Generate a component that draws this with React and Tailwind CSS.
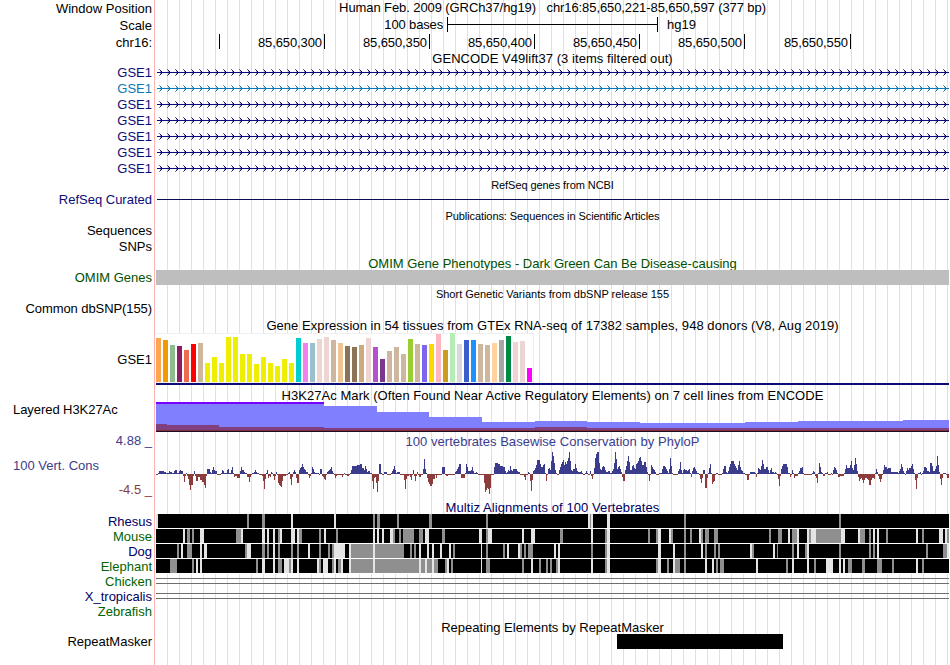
import clsx from 'clsx'

const TRACK_WIDTH = 793

const TICKS = [
  { gap: 'w-[64px]', label: '' },
  { gap: 'w-[105px]', label: '85,650,300' },
  { gap: 'w-[105px]', label: '85,650,350' },
  { gap: 'w-[105px]', label: '85,650,400' },
  { gap: 'w-[105px]', label: '85,650,450' },
  { gap: 'w-[105px]', label: '85,650,500' },
  { gap: 'w-[106px]', label: '85,650,550' },
]

const GENES = ['#0c0c78', '#0c78b4', '#0c0c78', '#0c0c78', '#0c0c78', '#0c0c78', '#0c0c78']

const TISSUES = [
  [44, '#ffa54f'], [42, '#ee9a00'], [37, '#8fbc8f'], [36, '#8b1c62'], [32, '#ee6a50'], [38, '#ff0000'],
  [39, '#cdb79e'], [19, '#eeee00'], [25, '#eeee00'], [19, '#eeee00'], [45, '#eeee00'], [45, '#eeee00'],
  [28, '#eeee00'], [28, '#eeee00'], [18, '#eeee00'], [25, '#eeee00'], [19, '#eeee00'], [16, '#eeee00'],
  [23, '#eeee00'], [19, '#eeee00'], [44, '#00cdcd'], [39, '#ee82ee'], [39, '#9ac0cd'], [43, '#eed5d2'],
  [45, '#eed5d2'], [42, '#cdb79e'], [39, '#eec591'], [36, '#8b7355'], [35, '#8b7355'], [37, '#cdaa7d'],
  [44, '#eed5d2'], [35, '#b452cd'], [23, '#7a378b'], [31, '#cdb79e'], [35, '#cdb79e'], [28, '#cdb79e'],
  [43, '#9acd32'], [38, '#cdb79e'], [37, '#7a67ee'], [38, '#ffd700'], [48, '#ffb6c1'], [32, '#cd9b1d'],
  [49, '#b4eeb4'], [38, '#d9d9d9'], [42, '#3a5fcd'], [42, '#1e90ff'], [38, '#cdb79e'], [37, '#cdb79e'],
  [39, '#ffd39b'], [42, '#a6a6a6'], [46, '#008b45'], [40, '#eed5d2'], [41, '#eed5d2'], [14, '#ff00ff'],
]

// each run is "start:value" and lasts until the next start
const parseRuns = (text) => {
  const runs = text.trim().split(/\s+/).map(r => r.split(':').map(Number))
  return runs.map(([x, v], i) => ({ x, v, w: (runs[i + 1]?.[0] ?? TRACK_WIDTH) - x }))
}

const PHYLOP = parseRuns(`
  0:-1 2:1 3:3 8:2 10:1 13:3 14:2 16:1 18:3 19:4 21:1 23:3 24:4 25:3 27:-2 28:-8 29:-2 30:1 31:-2 32:-5
  33:-11 34:-16 35:-11 37:-2 38:3 39:-2 40:-7 42:-3 44:-6 46:-8 48:-11 49:-14 50:-2 51:5 54:2 55:1 56:4
  57:7 58:4 59:3 61:-1 65:1 66:4 67:3 68:1 71:4 72:5 73:1 75:4 76:7 77:1 78:-3 79:-2 81:-4 84:3 85:7 86:4
  88:2 89:1 91:-3 93:-8 94:-3 95:-1 96:1 98:2 99:4 100:2 101:1 103:-1 106:-2 107:-7 108:-15 109:-5 110:1
  111:4 112:-4 113:-2 114:-3 115:2 116:1 117:-2 118:-6 119:-2 120:2 121:-1 122:-9 123:-11 124:-12 125:-13
  126:-7 127:-2 130:-1 132:1 133:2 134:-5 135:-11 136:-3 137:2 138:4 139:2 140:-4 141:-9 143:4 144:6 145:7
  146:10 147:7 148:5 149:4 150:2 152:-1 153:-4 154:-2 155:1 156:7 157:5 158:2 159:1 163:-1 164:5 166:-2
  167:-3 168:-5 169:-6 170:-1 171:2 172:3 173:4 174:5 175:7 176:3 177:1 178:-1 179:-4 180:-2 181:-1 186:-3
  187:-1 188:1 189:-1 191:-2 193:-1 194:1 195:4 196:8 201:9 204:10 206:6 208:4 209:8 210:5 211:2 212:3
  214:1 216:-7 217:-15 218:-4 219:-3 220:-9 221:-18 222:-7 223:10 225:1 226:-1 228:2 231:-1 235:1 236:3
  237:5 238:8 239:4 240:1 241:2 244:-1 248:-6 249:-15 250:-5 251:-2 253:-1 254:-3 255:-6 256:-1 257:4
  258:-2 259:-7 260:-2 261:2 262:-1 263:-3 265:-1 267:5 268:15 269:5 270:1 271:-4 272:-8 273:-10 274:-12
  276:-10 277:-5 279:-1 280:-4 281:-1 286:7 289:-1 290:-2 292:-1 299:2 300:3 301:5 302:7 303:10 305:-4
  309:1 310:10 311:7 312:3 315:4 316:7 317:3 318:1 320:2 321:1 322:-1 328:-9 329:-18 330:-16 331:-14
  332:-15 333:-20 334:-14 335:-1 338:7 339:11 342:10 344:8 347:7 349:3 350:1 351:2 352:4 353:3 354:8 355:4
  356:3 357:5 361:3 362:2 364:-1 368:-3 369:-6 370:-1 372:2 373:1 374:-7 375:-17 376:-6 377:3 378:4 379:6
  380:9 381:14 384:10 385:7 387:9 388:10 389:1 390:-7 391:-1 392:5 393:6 394:4 395:13 396:22 397:18 398:11
  399:4 400:1 401:-1 403:4 404:7 405:10 406:12 407:14 408:9 409:12 410:10 411:13 412:16 413:22 414:13
  415:4 416:3 417:5 419:10 420:6 421:3 422:2 425:3 426:1 427:-1 429:1 430:3 431:1 432:-1 434:3 435:-2
  436:-5 437:-1 438:6 439:16 440:20 441:22 443:11 444:5 445:4 446:7 447:8 448:7 449:4 450:2 452:3 454:1
  456:3 457:5 458:11 459:22 460:15 461:5 462:7 463:8 464:5 465:2 466:-3 467:-7 469:4 470:8 471:13 472:18
  473:12 474:4 476:8 477:9 478:6 479:5 480:10 481:11 482:13 483:16 484:17 485:13 486:9 488:12 490:7 491:2
  492:-1 493:-7 494:-1 495:9 496:7 497:5 498:4 499:2 500:-1 503:1 506:5 507:8 509:7 510:5 511:3 512:1
  513:5 514:16 515:8 516:1 517:-1 522:3 523:5 524:12 525:4 526:1 527:4 528:5 529:4 531:3 532:4 533:5 534:1
  535:-3 536:3 537:6 538:7 539:5 540:3 541:1 543:-1 544:-5 545:-9 546:-4 547:4 549:-14 551:-4 552:1 553:6
  554:10 555:1 556:-10 557:-8 558:-7 559:-1 560:1 562:-1 566:1 567:5 568:8 570:2 571:1 572:3 573:7 574:10
  575:13 578:10 579:8 580:6 581:4 582:9 583:13 584:7 585:4 586:3 587:1 589:-1 591:-6 593:-1 594:2 599:1
  600:-3 601:1 602:6 603:5 604:4 605:8 606:14 607:10 608:5 610:7 612:4 613:1 614:4 615:6 616:2 618:1 619:2
  620:1 621:-1 622:-5 623:-12 624:-2 625:5 626:8 627:10 631:7 632:1 634:-3 635:-1 636:4 637:1 638:-4
  639:-2 642:1 643:3 644:6 646:7 647:1 648:-1 656:1 657:3 658:2 659:-2 660:-4 661:-9 662:1 663:11 664:7
  665:2 666:1 667:-2 669:1 671:2 672:-1 675:1 676:-1 677:4 678:7 679:6 680:4 681:1 682:-3 684:-2 688:1
  689:5 690:9 691:6 694:9 695:13 696:6 697:4 698:9 699:16 700:10 701:3 702:-3 703:-7 704:-5 705:-4 706:-6
  707:-9 708:-6 709:-4 711:-5 712:-6 713:-11 715:-6 716:-4 718:-5 719:1 720:5 721:2 722:-2 723:-5 724:-8
  725:-5 726:-1 727:4 728:9 729:7 731:5 732:6 735:2 742:1 743:3 744:5 745:10 746:7 747:3 748:1 749:-1
  750:3 751:6 752:4 753:6 755:8 756:10 757:5 758:1 759:-6 760:-15 761:-4 762:1 764:2 765:-1 766:1 767:3
  768:7 770:6 771:3 773:2 774:11 776:8 777:3 779:5 780:8 781:18 782:9 783:2 784:-5 785:-11 786:-4 787:1
  790:-1 791:-4
`)

const H3K27AC = parseRuns('0:28 168:26 221:20 273:15 326:10 379:11 431:10 484:9 589:10 642:11 747:12')
const H3K27AC_LOW = parseRuns('0:8 11:7 63:5 168:4 379:5 431:4')

// L = weakly aligned, G = partly aligned, both as "x,width"
const SPECIES = [
  {
    name: 'Rhesus',
    color: 'text-[#000064]',
    marks: 'L0,2 G91,2 G106,3 L135,2 L178,2 G217,2 G221,3 G241,2 G273,3 G330,2 L432,2 G434,1 L435,2 L451,3 G528,2 G683,2',
  },
  {
    name: 'Mouse',
    color: 'text-[#006400]',
    marks: `L27,2 G31,3 G36,2 L44,4 G80,5 L85,2 L106,3 L111,2 L117,2 G122,2 L124,2 L135,4 L141,2 G143,3 G163,2
      L168,2 G180,2 L217,2 L221,2 L226,2 L234,3 G237,2 G243,2 G247,11 G263,4 L269,4 G286,3 L323,3 G330,2 L332,4
      L366,2 L375,4 G404,3 L435,2 G449,2 L451,3 G492,2 G500,2 L502,3 L513,2 G515,2 G528,2 G534,2 L543,2 G545,2
      G549,4 G558,4 G613,2 G622,4 L632,2 G636,5 L641,2 L651,2 G653,2 L655,5 G660,25 L685,4 L702,2 G704,5 G713,2
      L717,2 L721,2 G730,2 L760,2 G766,2 L783,4 L789,2 G791,2`,
  },
  {
    name: 'Dog',
    color: 'text-[#000064]',
    marks: `G21,2 L25,2 G31,5 L44,2 L48,3 G89,2 L91,4 G106,3 G111,2 L117,2 G122,2 G135,2 G141,2 L152,2 G163,2
      G172,2 G176,2 L178,11 L193,2 G195,22 L217,2 G219,29 G254,2 G258,2 L263,2 L271,2 L276,2 L284,2 L293,2
      G297,2 L325,1 G330,2 G347,2 L351,2 L362,2 G364,2 G368,2 G372,5 L398,2 L402,2 G435,2 G449,2 L451,3 L502,3
      L517,2 G528,2 L545,2 G549,2 G558,2 G562,2 L594,2 G596,2 L617,2 G621,1 G636,2 L641,2 G649,2 L651,2 G683,2
      G713,2 G717,2 L721,2 G770,2 G787,4 L791,2`,
  },
  {
    name: 'Elephant',
    color: 'text-[#006400]',
    marks: `G14,7 G36,2 L40,2 L44,2 G100,2 L106,3 L117,2 G122,4 L128,5 G133,2 L135,2 L141,2 L161,2 G163,2 L167,5
      G176,2 L178,2 G182,3 L185,2 L193,2 G195,22 L217,2 G219,44 L263,2 G265,4 L269,2 G271,5 L276,2 G278,4
      G289,2 L291,2 G295,2 L325,1 G330,4 G366,2 L375,2 G383,2 G390,2 G394,2 G400,2 L402,2 L435,2 G449,2 L451,3
      G500,2 L502,3 G511,2 L517,2 G519,5 G528,2 L549,2 L556,2 G560,2 G564,4 L600,2 G630,2 L636,2 L651,2 G658,2
      L670,7 L683,2 L687,2 G692,4 G706,3 G721,5 G736,2 L760,2 G766,2`,
  },
]

const parseMarks = (text) =>
  text.trim().split(/\s+/).map(m => {
    const [x, w] = m.slice(1).split(',').map(Number)
    return { x, w, fill: m[0] === 'L' ? '#e4e4e4' : '#8f8f8f' }
  })

function Row({ label, labelClass, className, children }) {
  return (
    <div className={clsx('flex', className)}>
      <div className={clsx('w-[156px] shrink-0 pr-[4px] text-right', labelClass)}>{label}</div>
      <div className="w-[793px] shrink-0">{children}</div>
    </div>
  )
}

function Title({ className, children }) {
  return <div className={clsx('ml-[156px] text-center', className)}>{children}</div>
}

function GeneArrows({ color }) {
  const starts = Array.from({ length: 99 }, (_, i) => 3 + i * 8)
  return (
    <svg width={TRACK_WIDTH} height="16" className="block" shapeRendering="crispEdges" fill={color}>
      <rect x="1" y="8" width="792" height="1" />
      {starts.map(x => (
        <g key={x}>
          <rect x={x} y="5" width="1" height="1" opacity="0.6" />
          <rect x={x + 1} y="6" width="1" height="1" />
          <rect x={x + 2} y="7" width="1" height="1" />
          <rect x={x + 1} y="7" width="1" height="1" opacity="0.4" />
          <rect x={x + 2} y="9" width="1" height="1" />
          <rect x={x + 1} y="9" width="1" height="1" opacity="0.4" />
          <rect x={x + 1} y="10" width="1" height="1" />
          <rect x={x} y="11" width="1" height="1" opacity="0.6" />
        </g>
      ))}
    </svg>
  )
}

function Expression() {
  return (
    <>
      <div className="flex h-[50px] w-[378px] items-end gap-[2px] border-y border-r border-[#f0f0f0] bg-white">
        {TISSUES.map(([height, color], i) => (
          <div key={i} className="w-[5px] shrink-0" style={{ height, backgroundColor: color }} />
        ))}
      </div>
      <div className="h-[2px] bg-[#0c0c78]" />
    </>
  )
}

function Histone() {
  return (
    <svg width={TRACK_WIDTH} height="30" className="block" shapeRendering="crispEdges">
      {H3K27AC.map(r => <rect key={r.x} x={r.x} y={30 - r.v} width={r.w} height={r.v} fill="#8080ff" />)}
      <rect x="0" y="0" width="168" height="2" fill="#7a00ff" />
      {H3K27AC_LOW.map(r => <rect key={r.x} x={r.x} y={30 - r.v} width={r.w} height={r.v} fill="#804080" />)}
      <rect x="0" y="28" width={TRACK_WIDTH} height="1" fill="#80303f" />
      <rect x="0" y="29" width={TRACK_WIDTH} height="1" fill="#200c20" />
    </svg>
  )
}

function Conservation() {
  return (
    <svg width={TRACK_WIDTH} height="50" className="block" shapeRendering="crispEdges">
      {PHYLOP.map(r => (
        <rect
          key={r.x}
          x={r.x}
          y={r.v > 0 ? 25 - r.v : 25}
          width={r.w}
          height={Math.abs(r.v)}
          fill={r.v > 0 ? '#3c3c8c' : '#8c3c3c'}
        />
      ))}
    </svg>
  )
}

function Alignment({ marks }) {
  return (
    <svg width={TRACK_WIDTH} height="15" className="block" shapeRendering="crispEdges">
      <rect width={TRACK_WIDTH} height="15" fill="#fff" />
      <rect width={TRACK_WIDTH} height="14" fill="#000" />
      {parseMarks(marks).map(m => <rect key={m.x} x={m.x} width={m.w} height="14" fill={m.fill} />)}
    </svg>
  )
}

function Unaligned() {
  return <div className="pt-[4px]"><div className="h-[6px] border-y border-[#6e6e6e]" /></div>
}

export default function App() {
  return (
    <div className="h-[665px] w-[950px] overflow-hidden bg-white">
      <div className="h-full w-[949px] bg-[linear-gradient(90deg,#fff_154px,#ffb4b4_154px,#ffb4b4_155px,#fff_155px,#fff_156px,transparent_156px),repeating-linear-gradient(90deg,transparent_0px,transparent_11px,#dcdcff_11px,#dcdcff_12px)] font-['Liberation_Sans',Arial,sans-serif] text-[13px] whitespace-pre text-black">
        <Row label="Window Position" className="h-[17px] leading-[17px]">
          <div className="text-center leading-[15px] tracking-[-0.09px]">Human Feb. 2009 (GRCh37/hg19)   chr16:85,650,221-85,650,597 (377 bp)</div>
        </Row>
        <Row label="Scale" className="h-[17px] leading-[17px]">
          <div className="flex h-[15px] items-center leading-[15px]">
            <span className="w-[288px] pr-[1px] text-right tracking-[-0.15px]">100 bases</span>
            <span className="ml-[3px] flex h-[15px] w-[211px] items-center border-x border-black">
              <span className="h-px w-full bg-black" />
            </span>
            <span className="ml-[9px]">hg19</span>
          </div>
        </Row>
        <Row label="chr16:" className="h-[17px] leading-[17px]">
          <div className="flex h-[15px]">
            {TICKS.map(t => (
              <span
                key={t.label}
                className={clsx('border-r border-black pr-[2px] text-right leading-[17px] tracking-[-0.1px]', t.gap)}
              >
                {t.label}
              </span>
            ))}
          </div>
        </Row>
        <Title className="h-[13px] leading-[15px] tracking-[0.05px]">GENCODE V49lift37 (3 items filtered out)</Title>

        {GENES.map((color, i) => (
          <Row
            key={i}
            label="GSE1"
            className="h-[16px] leading-[17px]"
            labelClass={i === 1 ? 'text-[#0c78b4]' : 'text-[#0c0c78]'}
          >
            <GeneArrows color={color} />
          </Row>
        ))}

        <Title className="h-[15px] text-[11px] leading-[19px] tracking-[-0.07px]">RefSeq genes from NCBI</Title>
        <Row label="RefSeq Curated" className="h-[16px] leading-[17px]" labelClass="text-[#0c0c78]">
          <div className="pt-[8px] pl-px"><div className="h-px bg-[#0c0c50]" /></div>
        </Row>

        <Title className="h-[15px] text-[11px] leading-[19px] tracking-[-0.08px]">Publications: Sequences in Scientific Articles</Title>
        <Row label="Sequences" className="h-[16px] leading-[17px]" />
        <Row label="SNPs" className="h-[16px] leading-[17px]" />

        <Title className="h-[16px] leading-[19px] text-[#005000]">OMIM Gene Phenotypes - Dark Green Can Be Disease-causing</Title>
        <Row label="OMIM Genes" className="h-[16px] leading-[16px]" labelClass="text-[#005000]">
          <div className="h-[15px] bg-[#bebebe]" />
        </Row>

        <Title className="h-[14px] text-[11px] leading-[17px]">Short Genetic Variants from dbSNP release 155</Title>
        <Row label="Common dbSNP(155)" className="h-[16px] leading-[17px]" labelClass="tracking-[-0.08px]" />

        <Title className="h-[17px] leading-[19px] tracking-[0.055px]">Gene Expression in 54 tissues from GTEx RNA-seq of 17382 samples, 948 donors (V8, Aug 2019)</Title>
        <Row label="GSE1" className="h-[53px] leading-[54px]">
          <Expression />
        </Row>

        <Title className="h-[16px] leading-[19px] tracking-[0.05px]">H3K27Ac Mark (Often Found Near Active Regulatory Elements) on 7 cell lines from ENCODE</Title>
        <Row
          label={<div className="pl-[13px] text-left tracking-[-0.06px]">Layered H3K27Ac</div>}
          className="h-[30px] leading-[16px]"
        >
          <Histone />
        </Row>

        <Row
          className="h-[67px]"
          label={
            <div className="flex h-[67px] flex-col justify-between leading-[18px] text-[#3c3c8c]">
              <div>4.88 _</div>
              <div className="pl-[13px] text-left">100 Vert. Cons</div>
              <div className="text-[#8c3c3c]">-4.5 _</div>
            </div>
          }
        >
          <div className="h-[17px] text-center leading-[19px] tracking-[0.04px] text-[#3c3c8c]">100 vertebrates Basewise Conservation by PhyloP</div>
          <Conservation />
        </Row>

        <Title className="h-[15px] leading-[18px] tracking-[0.08px] text-[#000064]">Multiz Alignments of 100 Vertebrates</Title>
        {SPECIES.map(s => (
          <Row key={s.name} label={s.name} className="h-[15px] leading-[16px]" labelClass={s.color}>
            <Alignment marks={s.marks} />
          </Row>
        ))}
        <Row label="Chicken" className="h-[15px] leading-[16px]" labelClass="text-[#006400]"><Unaligned /></Row>
        <Row label="X_tropicalis" className="h-[15px] leading-[16px]" labelClass="text-[#000064]"><Unaligned /></Row>
        <Row label="Zebrafish" className="h-[15px] leading-[16px]" labelClass="text-[#006400]" />

        <Title className="h-[15px] leading-[18px]">Repeating Elements by RepeatMasker</Title>
        <Row label="RepeatMasker" className="h-[16px] leading-[16px]">
          <div className="ml-[461px] h-[15px] w-[166px] bg-black" />
        </Row>
      </div>
    </div>
  )
}
